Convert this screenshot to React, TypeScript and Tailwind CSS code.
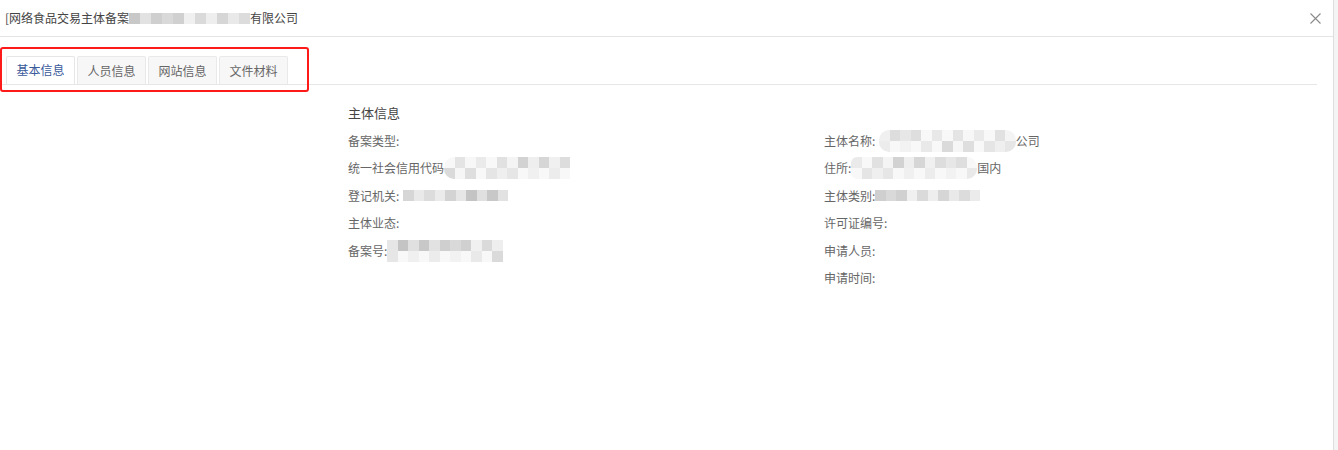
import React from "react";

const shadeSeq = [
  "#d9d9d9", "#c8c8c8", "#e6e6e6", "#dcdcdc", "#eeeeee", "#d0d0d0", "#e2e2e2", "#c4c4c4",
  "#ebebeb", "#d6d6d6", "#f0f0f0", "#cfcfcf", "#e0e0e0", "#d3d3d3", "#e9e9e9", "#dadada",
];

function Blur({ cells, rows, seed, light = false, cellW = 10.5 }: { cells: number; rows: number; seed: number; light?: boolean; cellW?: number }) {
  const rowArr = Array.from({ length: rows });
  return (
    <div className="flex flex-col">
      {rowArr.map((_, r) => (
        <div key={r} className="flex">
          {Array.from({ length: cells }).map((__, c) => {
            let col = shadeSeq[(seed + c * 5 + r * 3) % shadeSeq.length];
            if (light || r === 1) {
              const v = parseInt(col.slice(1, 3), 16);
              const nv = Math.min(248, v + (r === 1 ? 22 : 14));
              const h = nv.toString(16);
              col = `#${h}${h}${h}`;
            }
            return <div key={c} style={{ width: cellW, height: 11, background: col }} />;
          })}
        </div>
      ))}
    </div>
  );
}

function Row({ label, children }: { label: string; children?: React.ReactNode }) {
  return (
    <div className="h-[27.5px] flex items-center text-[12px] text-[#666]">
      <span>{label}</span>
      {children}
    </div>
  );
}

export default function App() {
  return (
    <div
      className="w-[1338px] h-[450px] flex bg-white overflow-hidden"
      style={{ fontFamily: '"Noto Sans CJK SC", "Noto Sans", sans-serif' }}
    >
      <div className="w-[1334px] h-full flex flex-col border-r border-[#dedede] relative">
        {/* header */}
        <div className="h-[37px] shrink-0 border-b border-[#e5e5e5] flex items-center justify-between pl-[5px] pr-[12px]">
          <div className="flex items-center text-[12px] text-[#444]">
            <span>[网络食品交易主体备案</span>
            <Blur cells={11} rows={1} seed={1} cellW={11} />
            <span>有限公司</span>
          </div>
          <svg width="11" height="11" viewBox="0 0 11 11" className="text-[#8a8a8a]">
            <path d="M0.5 0.5 L10.5 10.5 M10.5 0.5 L0.5 10.5" stroke="currentColor" strokeWidth="1.1" fill="none" />
          </svg>
        </div>

        {/* tabs */}
        <div className="pt-[19px] pl-[6px] mr-[16px] border-b border-[#e6e6e6] flex gap-[2px] text-[12px]">
          <div className="h-[28px] w-[69px] flex items-center justify-center bg-white border border-b-0 border-[#e6e6e6] rounded-t-[2px] text-[#3a5a9b] mb-[-1px] pb-[1px]">
            基本信息
          </div>
          {["人员信息", "网站信息", "文件材料"].map((t) => (
            <div
              key={t}
              className="h-[28px] w-[69px] flex items-center justify-center bg-[#f7f7f7] border border-b-0 border-[#e9e9e9] rounded-t-[2px] text-[#666]"
            >
              {t}
            </div>
          ))}
        </div>

        {/* red annotation box */}
        <div className="absolute left-0 top-[47px] w-[309px] h-[45px] border-[2px] border-[#ff1a1a] rounded-[3px] pointer-events-none" />

        {/* content */}
        <div className="pl-[348px] pt-[18px]">
          <div className="text-[13px] text-[#444] h-[20px] leading-[20px] mb-[4px]">主体信息</div>
          <div className="flex">
            <div className="w-[476px] flex flex-col">
              <Row label="备案类型:" />
              <Row label="统一社会信用代码">
                <div className="rounded-l-[10px] overflow-hidden">
                  <Blur cells={12} rows={2} seed={4} light />
                </div>
              </Row>
              <Row label="登记机关:">
                <div className="ml-[4px]">
                  <Blur cells={10} rows={1} seed={9} />
                </div>
              </Row>
              <Row label="主体业态:" />
              <Row label="备案号:">
                <Blur cells={11} rows={2} seed={2} />
              </Row>
            </div>
            <div className="flex flex-col">
              <Row label="主体名称:">
                <div className="ml-[4px] rounded-[10px] overflow-hidden">
                  <Blur cells={13} rows={2} seed={6} light />
                </div>
                <span>公司</span>
              </Row>
              <Row label="住所:">
                <div className="rounded-r-[10px] rounded-l-[6px] overflow-hidden">
                  <Blur cells={12} rows={2} seed={3} light />
                </div>
                <span>国内</span>
              </Row>
              <Row label="主体类别:">
                <Blur cells={10} rows={1} seed={11} />
              </Row>
              <Row label="许可证编号:" />
              <Row label="申请人员:" />
              <Row label="申请时间:" />
            </div>
          </div>
        </div>
      </div>
      <div className="w-[4px] h-full bg-[#f4f4f4]" />
    </div>
  );
}
